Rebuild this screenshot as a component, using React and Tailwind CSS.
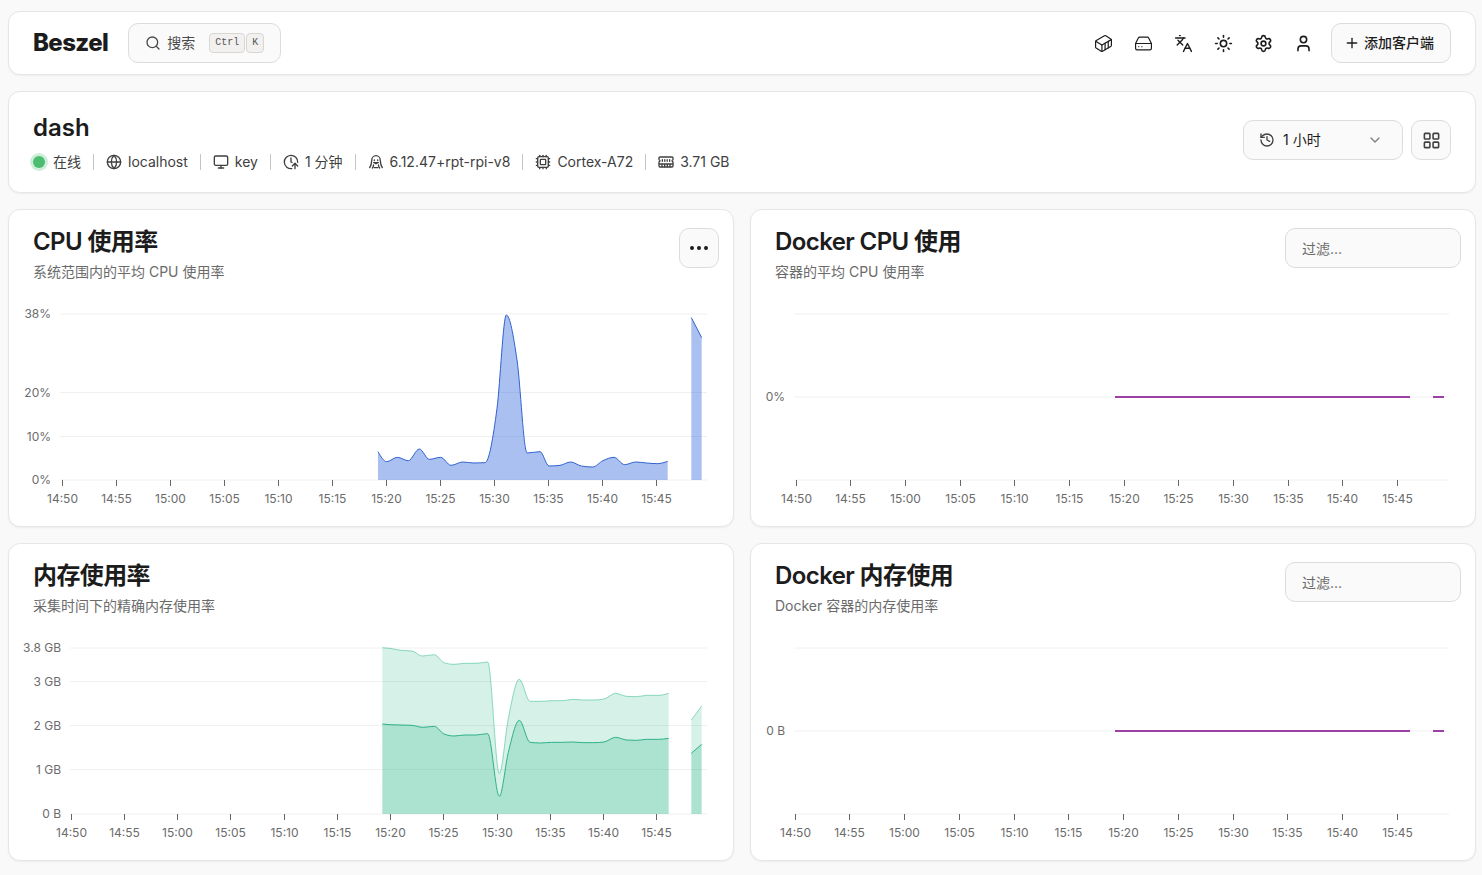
import {
  ChevronDown,
  ClockArrowUp,
  Container,
  Cpu,
  Ellipsis,
  Globe,
  HardDrive,
  History,
  Languages,
  LayoutGrid,
  Monitor,
  Plus,
  Search,
  Settings,
  Sun,
  User,
} from "lucide-react";

const CARD = "rounded-xl border border-[#e6e6e4] bg-white shadow-xs";
const CONTROL = "rounded-[10px] border border-[#dcdcda] bg-[#fafafa]";

function TuxIcon({ className }) {
  return (
    <svg viewBox="0 0 24 24" fill="none" stroke="currentColor" strokeWidth="2" strokeLinecap="round" strokeLinejoin="round" className={className} aria-hidden="true">
      <path d="M2.500 20.500c1.800-3 3-6 3-10.500a6.500 7.500 0 0 1 13 0c0 4.500 1.200 7.500 3 10.500" />
      <path d="M6.500 21c1.200-1.200 1.800-2.500 1.800-4.500M17.500 21c-1.200-1.200-1.800-2.500-1.800-4.500M9.500 20.500h5" />
      <path d="M9.500 8.800v1M14.500 8.800v1M8.500 13h7M9.500 13l2.500 1.700 2.500-1.700" />
    </svg>
  );
}

function MemoryIcon({ className }) {
  return (
    <svg viewBox="0 0 24 24" fill="none" stroke="currentColor" strokeWidth="2" strokeLinecap="round" strokeLinejoin="round" className={className} aria-hidden="true">
      <path d="M3 4.500h18a1.500 1.500 0 0 1 1.500 1.500v2.500a1.800 1.800 0 0 0 0 3.500v6a1.500 1.500 0 0 1-1.500 1.500H3A1.500 1.500 0 0 1 1.500 18v-6a1.800 1.800 0 0 0 0-3.500V6A1.500 1.500 0 0 1 3 4.500z" />
      <path d="M2 15h20M6.500 8.500v2.500M10.200 8.500v2.500M13.800 8.500v2.500M17.500 8.500v2.500M6 15v4M10 15v4M14 15v4M18 15v4" />
    </svg>
  );
}

/* Monotone cubic interpolation through [x, y] points. */
function monotone(points) {
  const n = points.length;
  if (n < 3) return points.map((p) => p.join(",")).join("L");
  const h = [];
  const s = [];
  for (let i = 0; i < n - 1; i++) {
    h.push(points[i + 1][0] - points[i][0]);
    s.push((points[i + 1][1] - points[i][1]) / h[i]);
  }
  const t = points.map((_, i) => {
    if (i === 0 || i === n - 1) return null;
    const p = (s[i - 1] * h[i] + s[i] * h[i - 1]) / (h[i - 1] + h[i]);
    return (Math.sign(s[i - 1]) + Math.sign(s[i])) * Math.min(Math.abs(s[i - 1]), Math.abs(s[i]), 0.5 * Math.abs(p));
  });
  t[0] = (3 * s[0] - t[1]) / 2;
  t[n - 1] = (3 * s[n - 2] - t[n - 2]) / 2;
  let d = points[0].join(",");
  for (let i = 0; i < n - 1; i++) {
    const [x0, y0] = points[i];
    const [x1, y1] = points[i + 1];
    const dx = h[i] / 3;
    d += `C${x0 + dx},${y0 + dx * t[i]} ${x1 - dx},${y1 - dx * t[i + 1]} ${x1},${y1}`;
  }
  return d;
}

const line = (points) => `M${monotone(points)}`;
const area = (points, base) =>
  `M${monotone(points)}L${points[points.length - 1][0]},${base}L${points[0][0]},${base}Z`;
const band = (top, bottom) => `M${monotone(top)}L${monotone([...bottom].reverse())}Z`;

const third = (dx, dy) => ([x, y]) => [dx + x / 3, dy + y / 3];

const cpuRuns = [
  [[24, 740], [50, 770], [82, 757], [115, 767], [148, 732], [178, 763], [212, 757], [243, 781], [278, 771], [312, 774], [345, 773], [381, 610], [409, 330], [441, 465], [471, 744], [510, 740], [537, 783], [570, 781], [602, 771], [634, 783], [668, 786], [699, 767], [732, 757], [764, 779], [797, 771], [830, 774], [862, 776], [893, 769]],
  [[964, 338], [995, 398]],
].map((run) => run.map(third(361, -77)));

const cachedRuns = [
  [[37, 323], [60, 325], [93, 331], [126, 333], [156, 348], [193, 344], [222, 368], [252, 373], [285, 370], [318, 370], [353, 366], [388, 700], [415, 535], [448, 418], [480, 484], [512, 484], [545, 482], [577, 482], [608, 478], [640, 480], [670, 480], [702, 477], [737, 460], [770, 469], [800, 470], [830, 466], [865, 466], [896, 460]],
  [[964, 540], [995, 498]],
].map((run) => run.map(third(361, -76)));

const usedRuns = [
  [[37, 552], [60, 554], [93, 555], [126, 556], [158, 562], [193, 559], [222, 582], [252, 588], [285, 585], [318, 585], [353, 581], [388, 769], [415, 637], [448, 541], [480, 607], [512, 609], [545, 607], [577, 607], [608, 606], [640, 608], [670, 608], [702, 606], [737, 592], [770, 600], [800, 601], [830, 598], [865, 598], [896, 595]],
  [[964, 640], [995, 613]],
].map((run) => run.map(third(361, -76)));

const TIMES = ["14:50", "14:55", "15:00", "15:05", "15:10", "15:15", "15:20", "15:25", "15:30", "15:35", "15:40", "15:45"];
const BASE = 198;

function Chart({ label, labelX, firstTick, tickStep, rows, children }) {
  return (
    <svg viewBox="0 0 724 244" className="block h-auto w-full text-xs" role="img" aria-label={label}>
      {rows.map(([y, text]) => (
        <g key={y}>
          <line x1={labelX + 9} x2="698" y1={y} y2={y} stroke="#f0f0f0" />
          {text && (
            <text x={labelX} y={y + 4} textAnchor="end" fill="#6b6b6b">{text}</text>
          )}
        </g>
      ))}
      {children}
      {TIMES.map((time, i) => {
        const x = Math.floor(firstTick + i * tickStep) + 0.5;
        return (
          <g key={time}>
            <line x1={x} x2={x} y1={BASE} y2={BASE + 6} stroke="#666666" />
            <text x={x} y="221" textAnchor="middle" fill="#6b6b6b">{time}</text>
          </g>
        );
      })}
    </svg>
  );
}

function ChartCard({ title, description, action, children }) {
  return (
    <section className={`${CARD} min-w-0 overflow-hidden`}>
      <header className="flex items-start justify-between pt-4 pr-3.5 pl-6">
        <div>
          <h2 className="text-2xl leading-8 font-semibold tracking-tight">{title}</h2>
          <p className="mt-1 text-sm leading-5 text-[#6b6b6b]">{description}</p>
        </div>
        {action && <div className="pt-0.5">{action}</div>}
      </header>
      {children}
    </section>
  );
}

function Filter({ label }) {
  return (
    <input
      type="text"
      aria-label={label}
      placeholder="过滤..."
      className={`${CONTROL} block h-10 w-44 px-4 text-sm placeholder:text-[#6b6b6b]`}
    />
  );
}

function IconButton({ label, children }) {
  return (
    <button type="button" aria-label={label} className="grid size-10 place-items-center">
      {children}
    </button>
  );
}

function Info({ icon, children }) {
  return (
    <li className="flex items-center gap-3">
      <span className="h-4 w-px bg-[#c4c4c4]" />
      <span className="flex items-center gap-1.5">
        {icon}
        {children}
      </span>
    </li>
  );
}

function FlatSeries() {
  return (
    <g stroke="#9c3fa6" strokeWidth="2">
      <line x1="364" x2="659" y1="115" y2="115" />
      <line x1="682" x2="693" y1="115" y2="115" />
    </g>
  );
}

export default function App() {
  return (
    <div className="flex min-h-screen flex-col gap-4 bg-[#f9f9f9] pt-[11px] pr-1.5 pb-3.5 pl-2 font-['Inter','Noto_Sans_CJK_SC',sans-serif] text-[#1c1c1c]">
      <header className={`${CARD} flex h-16 items-center px-6`}>
        <a href="/" className="mr-5 text-2xl leading-8 font-extrabold tracking-tight">Beszel</a>
        <button type="button" className={`${CONTROL} flex h-10 items-center gap-1.5 px-4 text-sm text-[#4a4a4a]`}>
          <Search className="size-4" />
          搜索
          <span className="ml-2 flex gap-px font-['Liberation_Mono',monospace] text-[10px] text-[#555555]">
            <kbd className="flex h-5 items-center rounded border border-[#d9d7d4] bg-[#f2f1ef] px-[5px] font-[inherit]">Ctrl</kbd>
            <kbd className="flex h-5 items-center rounded border border-[#d9d7d4] bg-[#f2f1ef] px-[5px] font-[inherit]">K</kbd>
          </span>
        </button>
        <nav className="ml-auto flex items-center">
          <IconButton label="容器"><Container className="size-[19px]" strokeWidth={1.5} /></IconButton>
          <IconButton label="硬盘"><HardDrive className="size-[19px]" strokeWidth={1.5} /></IconButton>
          <IconButton label="语言"><Languages className="size-[19px]" strokeWidth={1.75} /></IconButton>
          <IconButton label="主题"><Sun className="size-[19px]" /></IconButton>
          <IconButton label="设置"><Settings className="size-[19px]" /></IconButton>
          <IconButton label="用户"><User className="size-[19px]" /></IconButton>
          <button type="button" className={`${CONTROL} ml-2 flex h-10 items-center gap-1 pr-4 pl-3 text-sm font-medium`}>
            <Plus className="size-4" />
            添加客户端
          </button>
        </nav>
      </header>

      <section className={`${CARD} flex items-center justify-between px-6 pt-4 pb-5`}>
        <div>
          <h1 className="pt-0.5 text-2xl leading-9 font-semibold">dash</h1>
          <ul className="mt-1.5 flex items-center gap-3 text-sm leading-5 text-[#404040]">
            <li className="flex items-center gap-2">
              <span className="size-3 rounded-full bg-[#4bbd71] ring-3 ring-[#cfeeda]" />
              在线
            </li>
            <Info icon={<Globe className="size-4" />}>localhost</Info>
            <Info icon={<Monitor className="size-4" />}>key</Info>
            <Info icon={<ClockArrowUp className="size-4" />}>1 分钟</Info>
            <Info icon={<TuxIcon className="size-4" />}>6.12.47+rpt-rpi-v8</Info>
            <Info icon={<Cpu className="size-4" />}>Cortex-A72</Info>
            <Info icon={<MemoryIcon className="size-4" />}>3.71 GB</Info>
          </ul>
        </div>
        <div className="flex gap-2">
          <div className="relative">
            <History className="pointer-events-none absolute top-3 left-4 size-4 text-[#404040]" />
            <select aria-label="时间范围" className={`${CONTROL} h-10 w-40 appearance-none pr-8 pl-[39px] text-sm`}>
              <option>1 小时</option>
            </select>
            <ChevronDown className="pointer-events-none absolute top-3 right-5 size-4 text-[#808080]" />
          </div>
          <button type="button" aria-label="切换布局" className={`${CONTROL} grid size-10 place-items-center text-[#404040]`}>
            <LayoutGrid className="size-[19px]" />
          </button>
        </div>
      </section>

      <main className="grid gap-4 md:grid-cols-2">
        <ChartCard
          title="CPU 使用率"
          description="系统范围内的平均 CPU 使用率"
          action={
            <button type="button" aria-label="更多" className={`${CONTROL} grid size-10 place-items-center`}>
              <Ellipsis className="size-6" />
            </button>
          }
        >
          <Chart label="CPU 使用率" labelX={42} firstTick={53} tickStep={54} rows={[[32, "38%"], [110.5, "20%"], [154.5, "10%"], [BASE, "0%"]]}>
            {cpuRuns.map((run, i) => (
              <g key={i}>
                <path d={area(run, BASE)} fill="#2a62d9" fillOpacity="0.4" />
                <path d={line(run)} fill="none" stroke="#2f62cf" />
              </g>
            ))}
          </Chart>
        </ChartCard>

        <ChartCard title="Docker CPU 使用" description="容器的平均 CPU 使用率" action={<Filter label="过滤 Docker CPU" />}>
          <Chart label="Docker CPU 使用" labelX={34} firstTick={45} tickStep={54.67} rows={[[32, ""], [115, "0%"], [BASE, ""]]}>
            <FlatSeries />
          </Chart>
        </ChartCard>

        <ChartCard title="内存使用率" description="采集时间下的精确内存使用率">
          <Chart label="内存使用率" labelX={52} firstTick={62} tickStep={53.25} rows={[[32, "3.8 GB"], [65.5, "3 GB"], [109.5, "2 GB"], [153.5, "1 GB"], [BASE, "0 B"]]}>
            {usedRuns.map((run, i) => (
              <g key={i}>
                <path d={band(cachedRuns[i], run)} fill="#2eb88a" fillOpacity="0.2" />
                <path d={line(cachedRuns[i])} fill="none" stroke="#2eb88a" strokeOpacity="0.5" />
                <path d={area(run, BASE)} fill="#2eb88a" fillOpacity="0.4" />
                <path d={line(run)} fill="none" stroke="#2eb08a" />
              </g>
            ))}
          </Chart>
        </ChartCard>

        <ChartCard title="Docker 内存使用" description="Docker 容器的内存使用率" action={<Filter label="过滤 Docker 内存" />}>
          <Chart label="Docker 内存使用" labelX={34} firstTick={44} tickStep={54.75} rows={[[32, ""], [115, "0 B"], [BASE, ""]]}>
            <FlatSeries />
          </Chart>
        </ChartCard>
      </main>
    </div>
  );
}
